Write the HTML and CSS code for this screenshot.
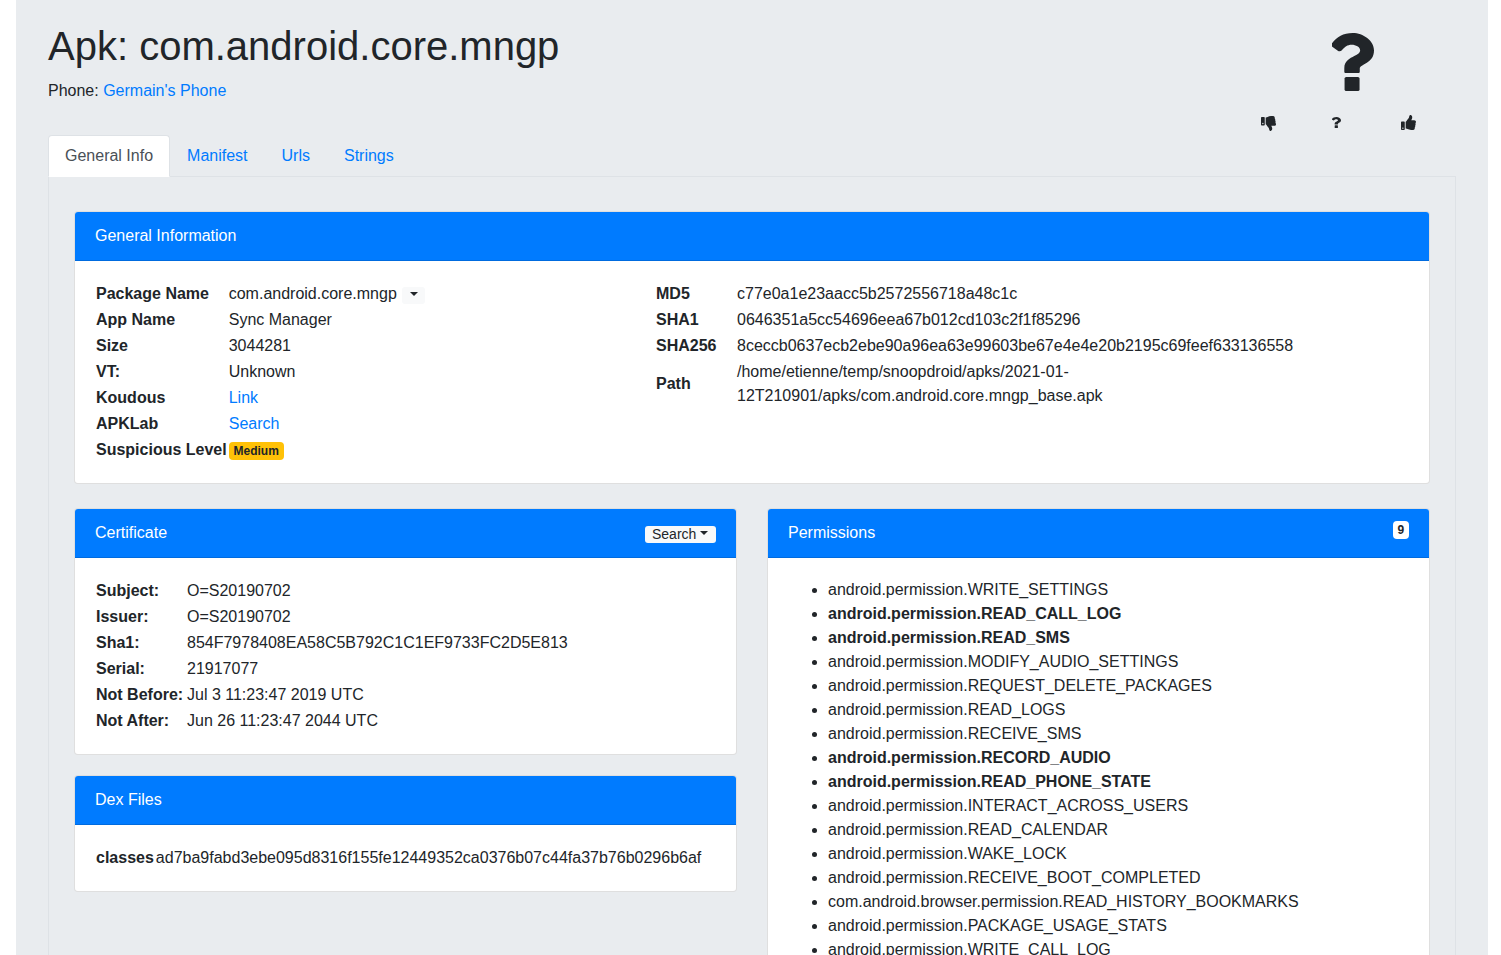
FILE: index.html
```html
<!DOCTYPE html>
<html lang="en">
<head>
<meta charset="utf-8">
<title>Apk: com.android.core.mngp</title>
<link rel="stylesheet" href="styles.css">
</head>
<body>
<main class="jumbo">
  <header class="head">
    <div>
      <h1 class="title">Apk: com.android.core.mngp</h1>
      <p class="phone">Phone: <a href="#">Germain's Phone</a></p>
    </div>
    <div class="verdict">
      <svg class="big-q" viewBox="30 0 347.500 512" preserveAspectRatio="none"><path d="M202 0C122 0 70.500 32.700 30 91c-7.400 10.600-5.100 25.100 5.200 32.900l43.100 32.700c10.400 7.900 25.100 6 33.300-4.100 25-31.400 43.600-49.500 82.700-49.500 30.800 0 68.800 19.800 68.800 49.600 0 22.600-18.600 34.100-49 51.200-35.400 19.900-82.300 44.600-82.300 106.400V341c0 6 5 11 11 11h106c6 0 11-5 11-11v-26.800c0-42.900 117.700-44.600 117.700-160.600C377.500 66.300 287 0 202 0z"/><rect x="134" y="388" width="124" height="124" rx="14"/></svg>
      <div class="votes">
        <svg class="thumb down" viewBox="0 0 512 512"><path d="M0 56v240c0 13.255 10.745 24 24 24h80c13.255 0 24-10.745 24-24V56c0-13.255-10.745-24-24-24H24C10.745 32 0 42.745 0 56zm40 200c0-13.255 10.745-24 24-24s24 10.745 24 24-10.745 24-24 24-24-10.745-24-24zm272 256c-20.183 0-29.485-39.293-33.931-57.795-5.206-21.666-10.589-44.070-25.393-58.902-32.469-32.524-49.503-73.967-89.117-113.111a11.980 11.980 0 0 1-3.558-8.521V59.901c0-6.541 5.243-11.878 11.783-11.998 15.831-.29 36.694-9.079 52.651-16.178C256.189 17.598 295.709.017 343.995 0h2.844c42.777 0 93.363.413 113.774 29.737 8.392 12.057 10.446 27.034 6.148 44.632 16.312 17.053 25.063 48.863 16.382 74.757 17.544 23.432 19.143 56.132 9.308 79.469l.11.11c11.893 11.949 19.523 31.259 19.439 49.197-.156 30.352-26.157 58.098-59.553 58.098H350.723C358.030 364.340 384 388.132 384 430.548 384 504 336 512 312 512z"/></svg>
        <svg class="small-q" viewBox="30 0 347.500 512" preserveAspectRatio="none"><path d="M202 0C122 0 70.500 32.700 30 91c-7.400 10.600-5.100 25.100 5.200 32.900l43.100 32.700c10.400 7.900 25.100 6 33.300-4.100 25-31.400 43.600-49.500 82.700-49.500 30.800 0 68.800 19.800 68.800 49.600 0 22.600-18.600 34.100-49 51.200-35.400 19.900-82.300 44.600-82.300 106.400V341c0 6 5 11 11 11h106c6 0 11-5 11-11v-26.800c0-42.900 117.700-44.600 117.700-160.600C377.500 66.300 287 0 202 0z"/><rect x="134" y="388" width="124" height="124" rx="14"/></svg>
        <svg class="thumb" viewBox="0 0 512 512"><path d="M104 224H24c-13.255 0-24 10.745-24 24v240c0 13.255 10.745 24 24 24h80c13.255 0 24-10.745 24-24V248c0-13.255-10.745-24-24-24zM64 472c-13.255 0-24-10.745-24-24s10.745-24 24-24 24 10.745 24 24-10.745 24-24 24zM384 81.452c0 42.416-25.970 66.208-33.277 94.548h101.723c33.397 0 59.397 27.746 59.553 58.098.084 17.938-7.546 37.249-19.439 49.197l-.11.11c9.836 23.337 8.237 56.037-9.308 79.469 8.681 25.895-.069 57.704-16.382 74.757 4.298 17.598 2.244 32.575-6.148 44.632C440.202 511.587 389.616 512 346.839 512l-2.845-.001c-48.287-.017-87.806-17.598-119.560-31.725-15.957-7.099-36.821-15.887-52.651-16.178-6.540-.12-11.783-5.457-11.783-11.998v-213.770c0-3.200 1.282-6.271 3.558-8.521 39.614-39.144 56.648-80.587 89.117-113.111 14.804-14.832 20.188-37.236 25.393-58.902C282.515 39.293 291.817 0 312 0c24 0 72 8 72 81.452z"/></svg>
      </div>
    </div>
  </header>

  <nav class="tabs">
    <a class="tab active" href="#">General Info</a>
    <a class="tab" href="#">Manifest</a>
    <a class="tab" href="#">Urls</a>
    <a class="tab" href="#">Strings</a>
  </nav>

  <section class="pane">
    <article class="card">
      <div class="card-head">General Information</div>
      <div class="card-body general">
        <table class="info">
          <tr><th>Package Name</th><td>com.android.core.mngp <button class="caret-btn"><span class="caret"></span></button></td></tr>
          <tr><th>App Name</th><td>Sync Manager</td></tr>
          <tr><th>Size</th><td>3044281</td></tr>
          <tr><th>VT:</th><td>Unknown</td></tr>
          <tr><th>Koudous</th><td><a href="#">Link</a></td></tr>
          <tr><th>APKLab</th><td><a href="#">Search</a></td></tr>
          <tr><th>Suspicious Level</th><td><span class="badge warn">Medium</span></td></tr>
        </table>
        <table class="info hashes">
          <tr><th>MD5</th><td>c77e0a1e23aacc5b2572556718a48c1c</td></tr>
          <tr><th>SHA1</th><td>0646351a5cc54696eea67b012cd103c2f1f85296</td></tr>
          <tr><th>SHA256</th><td>8ceccb0637ecb2ebe90a96ea63e99603be67e4e4e20b2195c69feef633136558</td></tr>
          <tr><th>Path</th><td class="path">/home/etienne/temp/snoopdroid/apks/2021-01-12T210901/apks/com.android.core.mngp_base.apk</td></tr>
        </table>
      </div>
    </article>

    <div class="columns">
      <div class="stack">
        <article class="card">
          <div class="card-head">
            <span>Certificate</span>
            <button class="search-btn">Search <span class="caret"></span></button>
          </div>
          <div class="card-body">
            <table class="info cert">
              <tr><th>Subject:</th><td>O=S20190702</td></tr>
              <tr><th>Issuer:</th><td>O=S20190702</td></tr>
              <tr><th>Sha1:</th><td>854F7978408EA58C5B792C1C1EF9733FC2D5E813</td></tr>
              <tr><th>Serial:</th><td>21917077</td></tr>
              <tr><th>Not Before:</th><td>Jul 3 11:23:47 2019 UTC</td></tr>
              <tr><th>Not After:</th><td>Jun 26 11:23:47 2044 UTC</td></tr>
            </table>
          </div>
        </article>
        <article class="card">
          <div class="card-head">Dex Files</div>
          <div class="card-body">
            <table class="info">
              <tr><th>classes</th><td>ad7ba9fabd3ebe095d8316f155fe12449352ca0376b07c44fa37b76b0296b6af</td></tr>
            </table>
          </div>
        </article>
      </div>
      <article class="card">
        <div class="card-head">
          <span>Permissions</span>
          <span class="badge light">9</span>
        </div>
        <div class="card-body">
          <ul class="perms">
            <li>android.permission.WRITE_SETTINGS</li>
            <li class="hot">android.permission.READ_CALL_LOG</li>
            <li class="hot">android.permission.READ_SMS</li>
            <li>android.permission.MODIFY_AUDIO_SETTINGS</li>
            <li>android.permission.REQUEST_DELETE_PACKAGES</li>
            <li>android.permission.READ_LOGS</li>
            <li>android.permission.RECEIVE_SMS</li>
            <li class="hot">android.permission.RECORD_AUDIO</li>
            <li class="hot">android.permission.READ_PHONE_STATE</li>
            <li>android.permission.INTERACT_ACROSS_USERS</li>
            <li>android.permission.READ_CALENDAR</li>
            <li>android.permission.WAKE_LOCK</li>
            <li>android.permission.RECEIVE_BOOT_COMPLETED</li>
            <li>com.android.browser.permission.READ_HISTORY_BOOKMARKS</li>
            <li>android.permission.PACKAGE_USAGE_STATS</li>
            <li>android.permission.WRITE_CALL_LOG</li>
          </ul>
        </div>
      </article>
    </div>
  </section>
</main>
</body>
</html>
```

FILE: styles.css
```css
* { box-sizing: border-box; }
html, body { height: 955px; overflow: hidden; }
body {
  margin: 0;
  background: #fff;
  color: #212529;
  font: 16px/24px "Liberation Sans", Arial, sans-serif;
}
a { color: #007bff; text-decoration: none; }
.jumbo {
  margin: 0 13px 0 16px;
  padding: 22px 32px 0;
  background: #e9ecef;
  height: 955px;
  overflow: hidden;
}
.head {
  display: flex;
  justify-content: space-between;
  height: 113px;
}
.title {
  margin: 0 0 9px;
  font-size: 40px;
  font-weight: 400;
  line-height: 48px;
}
.phone { margin: 0; }
.verdict {
  display: flex;
  flex-direction: column;
  align-items: flex-start;
  padding-top: 11px;
  margin-right: 40px;
}
.big-q { width: 42px; height: 58px; margin-left: 71px; fill: #212529; }
.votes { display: flex; align-items: flex-start; gap: 56px; margin-top: 24px; }
.thumb { width: 15px; height: 15px; fill: #212529; }
.thumb.down { margin-top: 1px; }
.small-q { width: 9px; height: 11px; margin: 2px 4px 0 0; fill: #212529; }

.tabs { display: flex; height: 42px; margin-bottom: -1px; position: relative; }
.tab {
  padding: 8px 16px;
  border: 1px solid transparent;
  border-radius: 4px 4px 0 0;
}
.tab.active {
  color: #495057;
  background: #fff;
  border-color: #dee2e6 #dee2e6 #fff;
}
.pane {
  border: 1px solid #dee2e6;
  padding: 34px 25px 0;
  min-height: 800px;
}
.card {
  background: #fff;
  border: 1px solid rgba(0, 0, 0, .125);
  border-radius: 4px;
  overflow: hidden;
}
.card-head {
  display: flex;
  justify-content: space-between;
  align-items: flex-start;
  background: #007bff;
  color: #fff;
  padding: 12px 20px;
  height: 49px;
  border-bottom: 1px solid rgba(0, 0, 0, .125);
}
.card-body { padding: 20px; }
.general { display: grid; grid-template-columns: 560px 1fr; align-items: start; justify-items: start; }
.info { border-collapse: collapse; }
.info th, .info td { padding: 1px; text-align: left; vertical-align: middle; }
.hashes th { width: 81px; }
.cert th { width: 91px; }
.caret-btn {
  display: inline-block;
  width: 23px;
  height: 17px;
  margin: 5px 0 0 1px;
  padding: 0;
  border: 0;
  border-radius: 3px;
  background: #f8f9fa;
  line-height: 14px;
  vertical-align: top;
}
.caret {
  display: inline-block;
  border-top: 4.200px solid #212529;
  border-left: 4.200px solid transparent;
  border-right: 4.200px solid transparent;
  vertical-align: 4px;
}
.badge {
  display: inline-block;
  padding: 3px 4.800px;
  border-radius: 4px;
  font-size: 12px;
  font-weight: 700;
  line-height: 12px;
  vertical-align: baseline;
}
.warn { background: #ffc107; color: #212529; }
.light { background: #fff; color: #212529; }
.search-btn {
  width: 71px;
  height: 17px;
  margin-top: 5px;
  padding: 0 0 0 7px;
  border: 0;
  border-radius: 3px;
  background: #f8f9fa;
  color: #212529;
  text-align: left;
  font: 14px/17px "Liberation Sans", Arial, sans-serif;
}
.columns {
  display: grid;
  grid-template-columns: 1fr 1fr;
  gap: 30px;
  margin-top: 24px;
  align-items: start;
}
.stack { display: flex; flex-direction: column; gap: 20px; }
.perms { margin: 0; padding-left: 40px; }
.hot { font-weight: 700; }
```
